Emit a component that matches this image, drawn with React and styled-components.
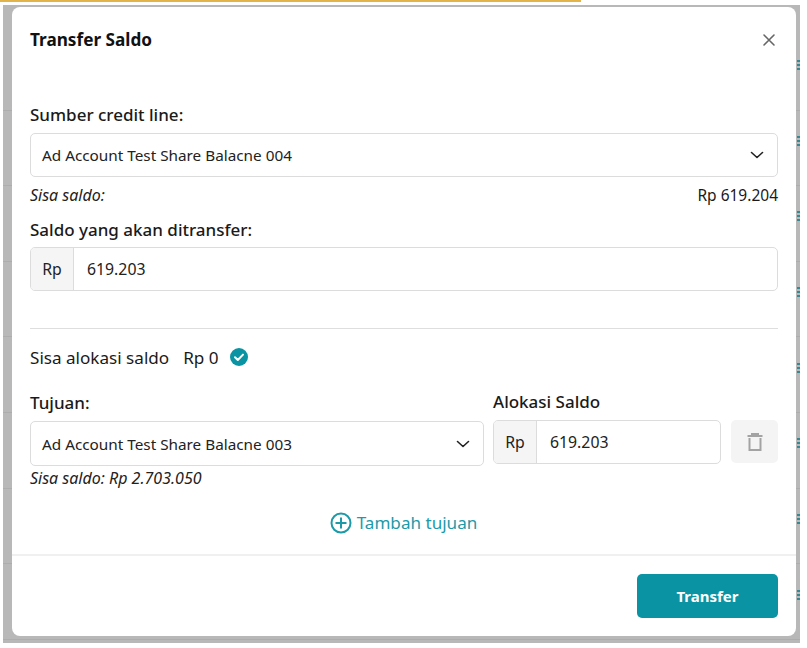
import React from "react";
import styled, { createGlobalStyle } from "styled-components";

const Global = createGlobalStyle`
  html, body { margin: 0; padding: 0; background: #fff; }
  body { font-family: "Noto Sans", "Open Sans", sans-serif; color: #1a1a1a; }
`;

const Page = styled.div`
  width: 807px;
  height: 648px;
  background: #fff;
  overflow: hidden;
`;
const LoadBar = styled.div`
  width: 581px;
  height: 2px;
  background: #e3b44a;
`;
const Backdrop = styled.div`
  position: relative;
  box-sizing: border-box;
  width: 797px;
  height: 638px;
  margin: 3px 0 0 3px;
  padding: 2px 4px 0 9px;
  background: repeating-linear-gradient(#b8b8b8 0 74.6px, #adadad 74.6px 75.6px);
  background-position: 0 30px;
`;
const Mark = styled.span`
  position: absolute;
  right: 0;
  top: ${p => p.$top}px;
  width: 3px;
  height: 10px;
  background: repeating-linear-gradient(#2f8c96 0 2px, transparent 2px 4px);
`;
const Modal = styled.div`
  position: relative;
  height: 629px;
  background: #fff;
  border-radius: 8px;
  display: flex;
  flex-direction: column;
`;
const Header = styled.header`
  display: flex;
  align-items: center;
  justify-content: space-between;
  height: 66px;
  padding: 0 17px 0 18px;
  box-sizing: border-box;
`;
const Title = styled.h2`
  margin: 0;
  font-size: 17.2px;
  line-height: 24px;
  font-weight: 700;
  color: #111;
`;
const Close = styled.button`
  border: 0;
  background: none;
  padding: 0;
  width: 20px;
  height: 20px;
  display: flex;
  align-items: center;
  justify-content: center;
`;
const Body = styled.div`
  flex: 1;
  padding: 30px 18px 0;
  display: flex;
  flex-direction: column;
`;
const Label = styled.div`
  font-size: 17px;
  line-height: 24px;
  font-weight: 500;
  color: #1a1a1a;
  margin-top: ${p => p.$mt ?? 0}px;
  margin-bottom: ${p => p.$mb ?? 6}px;
`;
const SelectBox = styled.div`
  box-sizing: border-box;
  height: ${p => p.$h ?? 44}px;
  border: 1px solid #dcdcdc;
  border-radius: 5px;
  padding: 0 12px 0 11px;
  display: flex;
  align-items: center;
  justify-content: space-between;
  font-size: 15.3px;
  color: #222;
`;
const BalanceRow = styled.div`
  display: flex;
  justify-content: space-between;
  font-size: 15.5px;
  line-height: 20px;
  margin-top: 8px;
`;
const Italic = styled.em`
  font-style: italic;
  font-size: 16px;
  color: #222;
`;
const InputBox = styled.div`
  box-sizing: border-box;
  height: 44px;
  border: 1px solid #dcdcdc;
  border-radius: 5px;
  display: flex;
  align-items: center;
  font-size: 15.8px;
  color: #222;
  overflow: hidden;
  flex: ${p => (p.$grow ? 1 : "none")};
`;
const Addon = styled.span`
  align-self: stretch;
  width: 42px;
  background: #f5f5f5;
  border-right: 1px solid #dcdcdc;
  display: flex;
  align-items: center;
  justify-content: center;
`;
const Value = styled.span`
  padding-left: 13px;
`;
const Divider = styled.hr`
  border: 0;
  border-top: 1px solid #dedede;
  margin: 37px 0 0;
`;
const AllocRow = styled.div`
  display: flex;
  align-items: center;
  gap: 14px;
  height: 24px;
  margin-top: 16px;
  font-size: 17.1px;
`;
const Dest = styled.div`
  display: grid;
  grid-template-columns: 454px 1fr;
  column-gap: 9px;
  margin-top: 22px;
`;
const Col = styled.div`
  display: flex;
  flex-direction: column;
`;
const AmountRow = styled.div`
  display: flex;
  gap: 10px;
`;
const Trash = styled.button`
  width: 47px;
  height: 43px;
  border: 0;
  border-radius: 5px;
  background: #f4f4f4;
  padding: 0;
  display: flex;
  align-items: center;
  justify-content: center;
`;
const Note = styled.div`
  line-height: 20px;
  margin-top: 2px;
`;
const AddLink = styled.div`
  align-self: center;
  margin: 23px 0 0 -1px;
  display: flex;
  align-items: center;
  gap: 5px;
  font-size: 17.1px;
  line-height: 24px;
  color: #1c9aa8;
`;
const Footer = styled.footer`
  box-sizing: border-box;
  height: 82px;
  border-top: 2px solid #f0f0f0;
  padding: 18px 18px 0 0;
  display: flex;
  justify-content: flex-end;
  align-items: flex-start;
`;
const Submit = styled.button`
  width: 141px;
  height: 44px;
  border: 0;
  border-radius: 5px;
  background: #0a94a3;
  color: #fff;
  font-family: inherit;
  font-size: 15px;
  font-weight: 700;
`;

const Chevron = () => (
  <svg width="16" height="16" viewBox="0 0 16 16" fill="none" stroke="#222" strokeWidth="1.6" strokeLinecap="round" strokeLinejoin="round">
    <path d="M2.5 5.5 8 10.5l5.5-5" />
  </svg>
);

export default function App() {
  return (
    <Page>
      <Global />
      <LoadBar />
      <Backdrop>
        {[55, 131, 206, 282, 358, 433, 509, 585].map(t => <Mark key={t} $top={t} />)}
        <Modal>
          <Header>
            <Title>Transfer Saldo</Title>
            <Close aria-label="close">
              <svg width="14" height="14" viewBox="0 0 14 14" stroke="#666" strokeWidth="1.6" strokeLinecap="round">
                <path d="M2 2l10 10M12 2 2 12" />
              </svg>
            </Close>
          </Header>
          <Body>
            <Label>Sumber credit line:</Label>
            <SelectBox>
              Ad Account Test Share Balacne 004
              <Chevron />
            </SelectBox>
            <BalanceRow>
              <Italic>Sisa saldo:</Italic>
              <span>Rp 619.204</span>
            </BalanceRow>
            <Label $mt={13} $mb={5}>Saldo yang akan ditransfer:</Label>
            <InputBox>
              <Addon>Rp</Addon>
              <Value>619.203</Value>
            </InputBox>
            <Divider />
            <AllocRow>
              <span>Sisa alokasi saldo</span>
              <span>Rp 0</span>
              <svg width="18" height="18" viewBox="0 0 18 18" style={{ marginLeft: -3 }}>
                <circle cx="9" cy="9" r="9" fill="#0a94a3" />
                <path d="M5 9.3l2.8 2.7L13 6.6" fill="none" stroke="#fff" strokeWidth="2" strokeLinecap="round" strokeLinejoin="round" />
              </svg>
            </AllocRow>
            <Dest>
              <Col>
                <Label>Tujuan:</Label>
                <SelectBox $h={45}>
                  Ad Account Test Share Balacne 003
                  <Chevron />
                </SelectBox>
                <Note><Italic>Sisa saldo: Rp 2.703.050</Italic></Note>
              </Col>
              <Col>
                <Label $mt={-1} $mb={6}>Alokasi Saldo</Label>
                <AmountRow>
                  <InputBox $grow>
                    <Addon>Rp</Addon>
                    <Value>619.203</Value>
                  </InputBox>
                  <Trash aria-label="delete">
                    <svg width="16" height="18" viewBox="0 0 16 18" fill="none" stroke="#a3a3a3" strokeWidth="2">
                      <path d="M0.5 3h15M5 3V1h6v2M2.5 5v12h11V5" />
                    </svg>
                  </Trash>
                </AmountRow>
              </Col>
            </Dest>
            <AddLink>
              <svg width="22" height="22" viewBox="0 0 22 22" fill="none" stroke="#1c9aa8" strokeWidth="2">
                <circle cx="11" cy="11" r="9.5" />
                <path d="M11 5.5v11M5.5 11h11" />
              </svg>
              Tambah tujuan
            </AddLink>
          </Body>
          <Footer>
            <Submit>Transfer</Submit>
          </Footer>
        </Modal>
      </Backdrop>
    </Page>
  );
}
